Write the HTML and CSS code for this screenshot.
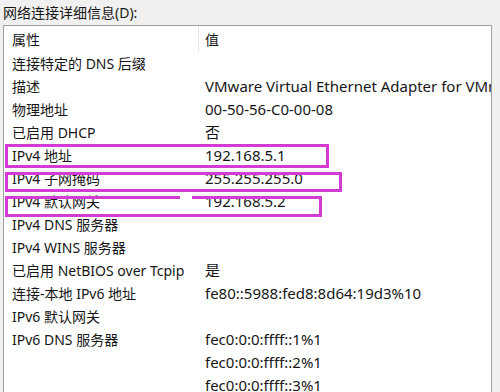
FILE: index.html
```html
<!DOCTYPE html>
<html lang="zh-CN">

<head>
    <meta charset="UTF-8">
    <title>网络连接详细信息</title>
    <link rel="stylesheet" href="styles.css">
</head>

<body>

    <div class="dialog">
        <div class="title">网络连接详细信息(D):</div>

        <div class="list">
            <div class="head">
                <div class="cell key">属性</div>
                <div class="cell val">值</div>
            </div>
            <div class="row"><div class="cell key">连接特定的 DNS 后缀</div><div class="cell val"></div></div>
            <div class="row"><div class="cell key">描述</div><div class="cell val">VMware Virtual Ethernet Adapter for VMnet8</div></div>
            <div class="row"><div class="cell key">物理地址</div><div class="cell val">00-50-56-C0-00-08</div></div>
            <div class="row"><div class="cell key">已启用 DHCP</div><div class="cell val">否</div></div>
            <div class="row"><div class="cell key">IPv4 地址</div><div class="cell val">192.168.5.1</div></div>
            <div class="row"><div class="cell key">IPv4 子网掩码</div><div class="cell val">255.255.255.0</div></div>
            <div class="row"><div class="cell key">IPv4 默认网关</div><div class="cell val">192.168.5.2</div></div>
            <div class="row"><div class="cell key">IPv4 DNS 服务器</div><div class="cell val"></div></div>
            <div class="row"><div class="cell key">IPv4 WINS 服务器</div><div class="cell val"></div></div>
            <div class="row"><div class="cell key">已启用 NetBIOS over Tcpip</div><div class="cell val">是</div></div>
            <div class="row"><div class="cell key">连接-本地 IPv6 地址</div><div class="cell val">fe80::5988:fed8:8d64:19d3%10</div></div>
            <div class="row"><div class="cell key">IPv6 默认网关</div><div class="cell val"></div></div>
            <div class="row"><div class="cell key">IPv6 DNS 服务器</div><div class="cell val">fec0:0:0:ffff::1%1</div></div>
            <div class="row"><div class="cell key"></div><div class="cell val">fec0:0:0:ffff::2%1</div></div>
            <div class="row"><div class="cell key"></div><div class="cell val">fec0:0:0:ffff::3%1</div></div>
        </div>

        <!-- marques roses ajoutées sur la capture -->
        <div class="mark mark-addr"></div>
        <div class="mark mark-mask"></div>
        <div class="mark mark-gw"><span class="gap"></span></div>
    </div>

</body>

</html>
```

FILE: styles.css
```css
:root {
    --background: #f0f0f0;
    --white: #ffffff;
    --text: #161616;
    --border: #a0a0a0;
    --divider: #e5e5e5;
    --mark: #d23cd2;
}

html,
body {
    margin: 0;
    padding: 0;
    height: 392px;
    overflow: hidden;
}

body {
    font-family: "Noto Sans", "Noto Sans CJK SC", sans-serif;
    font-size: 14px;
    background-color: var(--background);
    color: var(--text);
}

.dialog {
    position: relative;
    height: 392px;
}

.title {
    padding: 4px 0 0 3px;
    line-height: 18px;
    height: 17px;
}

.list {
    margin: 4px 0 0 3px;
    width: 489px;
    height: 380px;
    box-sizing: border-box;
    background-color: var(--white);
    border: 1px solid var(--border);
    border-bottom: none;
    overflow: hidden;
}

.head,
.row {
    display: grid;
    grid-template-columns: 195px 1fr;
    white-space: nowrap;
}

.head {
    height: 26px;
    line-height: 27px;
}

.head .key {
    border-right: 1px solid var(--divider);
}

.row {
    height: 23px;
    line-height: 23px;
}

.cell {
    overflow: hidden;
    box-sizing: border-box;
}

.key {
    padding-left: 8px;
}

.val {
    padding-left: 6px;
}

.row .val {
    font-size: 15px;
}

.mark {
    position: absolute;
    left: 5px;
    box-sizing: border-box;
    border: 3px solid var(--mark);
}

.mark-addr {
    top: 144px;
    width: 324px;
    height: 24px;
}

.mark-mask {
    top: 172px;
    width: 337px;
    height: 20px;
}

.mark-gw {
    top: 196px;
    width: 317px;
    height: 21px;
}

.mark-gw .gap {
    position: absolute;
    top: -3px;
    left: 172px;
    width: 12px;
    height: 3px;
    background-color: var(--white);
}
```
